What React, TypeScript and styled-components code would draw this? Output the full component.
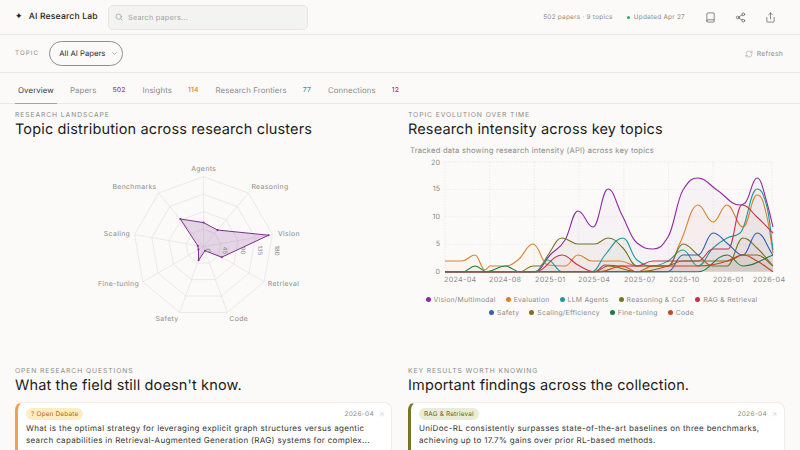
import { FC } from "react";
import styled, { createGlobalStyle } from "styled-components";
import { Book, ChevronDown, RefreshCw, Search, Share, Share2, ArrowUpRight } from "lucide-react";

const GlobalStyle = createGlobalStyle`
  html, body { margin: 0; padding: 0; background: #fbfaf8; }
  body {
    font-family: Inter, "Liberation Sans", sans-serif;
    color: #1c1c1a;
    text-rendering: geometricPrecision;
  }
  * { box-sizing: border-box; }
`;

const Page = styled.div`
  width: 800px;
  height: 450px;
  overflow: hidden;
  background: #fbfaf8;
`;

const Header = styled.header`
  height: 35px;
  display: flex;
  align-items: center;
  padding: 0 15px;
  border-bottom: 1px solid #e8e7e4;
`;

const Brand = styled.div`
  display: flex;
  align-items: center;
  gap: 6px;
  width: 93px;
  font-size: 8.6px;
  font-weight: 500;
  letter-spacing: 0.02em;
  white-space: nowrap;
`;

const Star = styled.span`
  font-family: "DejaVu Sans", sans-serif;
  font-size: 9px;
`;

const SearchBox = styled.div`
  width: 200px;
  height: 25px;
  display: flex;
  align-items: center;
  gap: 5px;
  padding: 0 6px;
  background: #f3f3f1;
  border: 1px solid #e5e4e1;
  border-radius: 5px;
  font-size: 7.3px;
  letter-spacing: 0.03em;
  color: #a3a3a0;
  svg { color: #999; }
`;

const HeaderRight = styled.div`
  margin-left: auto;
  display: flex;
  align-items: center;
  font-size: 6.4px;
  letter-spacing: 0.04em;
  color: #8b8b88;
`;

const Updated = styled.span`
  display: flex;
  align-items: center;
  gap: 4px;
  margin-left: 14px;
  margin-right: 10px;
`;

const Dot = styled.i<{ $color: string; $size?: number }>`
  display: inline-block;
  flex: none;
  width: ${(p) => p.$size ?? 3}px;
  height: ${(p) => p.$size ?? 3}px;
  border-radius: 50%;
  background: ${(p) => p.$color};
`;

const IconButton = styled.span`
  width: 30px;
  display: flex;
  justify-content: center;
  color: #4a4a48;
`;

const TopicRow = styled.div`
  height: 38px;
  display: flex;
  align-items: center;
  padding: 0 15px;
  border-bottom: 1px solid #e8e7e4;
`;

const TopicLabel = styled.span`
  font-size: 6.2px;
  letter-spacing: 0.18em;
  color: #8b8b88;
  margin-right: 10px;
`;

const TopicSelect = styled.div`
  width: 74px;
  height: 25px;
  display: flex;
  align-items: center;
  gap: 6px;
  padding-left: 9px;
  border: 1px solid #8f8f8c;
  border-radius: 13px;
  font-size: 7.7px;
  color: #2c2c2a;
  svg { color: #777; }
`;

const RefreshButton = styled.span`
  margin-left: auto;
  margin-right: 2px;
  display: flex;
  align-items: center;
  gap: 4px;
  font-size: 6.8px;
  letter-spacing: 0.03em;
  color: #8b8b88;
`;

const Tabs = styled.nav`
  height: 31px;
  display: flex;
  padding: 0 15px;
  border-bottom: 1px solid #e8e7e4;
`;

const Tab = styled.div<{ $active?: boolean }>`
  height: 31px;
  display: flex;
  align-items: center;
  padding: 3px ${(p) => (p.$active ? "3px" : "0")} 0;
  margin-right: ${(p) => (p.$active ? "13px" : "17px")};
  font-size: 7.9px;
  letter-spacing: 0.01em;
  color: ${(p) => (p.$active ? "#3a3a38" : "#8b8b88")};
  border-bottom: 1px solid ${(p) => (p.$active ? "#a5a5a2" : "transparent")};
`;

const TabCount = styled.span<{ $color: string }>`
  margin-left: 16px;
  font-size: 6.8px;
  font-weight: 500;
  color: ${(p) => p.$color};
`;

const Grid = styled.main`
  display: grid;
  grid-template-columns: 377px 377px;
  column-gap: 16px;
  padding: 0 15px;
`;

const Panel = styled.section<{ $height: number }>`
  height: ${(p) => p.$height}px;
  display: flex;
  flex-direction: column;
`;

const Eyebrow = styled.div<{ $top?: number }>`
  margin-top: ${(p) => p.$top ?? 0}px;
  font-size: 6.8px;
  line-height: 10px;
  letter-spacing: 0.13em;
  color: #8b8b88;
`;

const Title = styled.h2`
  margin: 0;
  font-size: 14.5px;
  line-height: 19px;
  font-weight: 400;
  letter-spacing: 0.01em;
  color: #1c1c1a;
`;

const ChartNote = styled.div`
  margin: 7px 0 0 2px;
  font-size: 7.6px;
  line-height: 10px;
  letter-spacing: 0.03em;
  color: #8b8b88;
`;

const ChartSvg = styled.svg`
  display: block;
  flex: none;
  font-family: Inter, "Liberation Sans", sans-serif;
`;

const Legend = styled.div`
  width: 345px;
  margin: 9px 0 0 11px;
  display: flex;
  flex-wrap: wrap;
  justify-content: center;
  column-gap: 10px;
  row-gap: 3px;
`;

const LegendItem = styled.span`
  display: flex;
  align-items: center;
  gap: 3px;
  font-size: 6.8px;
  line-height: 9.5px;
  letter-spacing: 0.04em;
  color: #8b8b88;
  white-space: nowrap;
`;

const Card = styled.article<{ $accent: string }>`
  margin-top: 7px;
  height: 80px;
  padding: 5px 6px 0 8px;
  background: #fff;
  border: 1px solid #eeedea;
  border-left: 3px solid ${(p) => p.$accent};
  border-radius: 8px;
`;

const CardTop = styled.div`
  display: flex;
  align-items: center;
  justify-content: space-between;
`;

const Badge = styled.span<{ $bg: string; $color: string }>`
  display: inline-flex;
  align-items: center;
  height: 12px;
  padding: 0 5px;
  border-radius: 6px;
  background: ${(p) => p.$bg};
  color: ${(p) => p.$color};
  font-size: 6.4px;
  letter-spacing: 0.03em;
`;

const CardMeta = styled.span`
  display: flex;
  align-items: center;
  gap: 4px;
  font-size: 6.5px;
  letter-spacing: 0.05em;
  color: #8b8b88;
  svg { color: #c8c8c5; }
`;

const CardText = styled.p`
  margin: 3px 0 0;
  padding-right: 4px;
  font-size: 8px;
  line-height: 11.7px;
  letter-spacing: 0.04em;
  color: #33332f;
`;

// radar
const CX = 203.5;
const CY = 246.7;
const R = 70;
const radar = [
  { name: "Agents", v: 62, x: 203.7, y: 171.3 },
  { name: "Reasoning", v: 56, x: 270, y: 188.7 },
  { name: "Vision", v: 170, x: 289, y: 236 },
  { name: "Retrieval", v: 54, x: 283.5, y: 286.3 },
  { name: "Code", v: 11, x: 238.7, y: 321.3 },
  { name: "Safety", v: 37, x: 167, y: 321.3 },
  { name: "Fine-tuning", v: 15, x: 118.5, y: 286.3 },
  { name: "Scaling", v: 15, x: 117, y: 236 },
  { name: "Benchmarks", v: 93, x: 134.5, y: 188.7 },
];
const polar = (i: number, r: number) => {
  const a = (i * 2 * Math.PI) / radar.length;
  return [CX + r * Math.sin(a), CY - r * Math.cos(a)];
};
const ring = (r: number) =>
  radar.map((_, i) => polar(i, r).map((n) => n.toFixed(1)).join(",")).join(" ");
const radarShape = radar.map((d, i) => polar(i, (d.v / 180) * R));

const RadarChart: FC = () => (
  <ChartSvg width={377} height={215} viewBox="15 139 377 215">
    {[0.25, 0.5, 0.75, 1].map((k) => (
      <polygon key={k} points={ring(R * k)} fill="none" stroke="#e3e2df" strokeWidth={0.7} />
    ))}
    {radar.map((_, i) => {
      const [x, y] = polar(i, R);
      return <line key={i} x1={CX} y1={CY} x2={x} y2={y} stroke="#e3e2df" strokeWidth={0.7} />;
    })}
    <polygon
      points={radarShape.map((p) => p.join(",")).join(" ")}
      fill="#8e3a9d"
      fillOpacity={0.2}
      stroke="#7f2f8f"
      strokeWidth={1}
    />
    {radarShape.map((p, i) => (
      <circle key={i} cx={p[0]} cy={p[1]} r={1} fill="#7f2f8f" />
    ))}
    {[
      ["0", 205.7],
      ["45", 223],
      ["90", 240.7],
      ["135", 257.7],
      ["180", 275.3],
    ].map(([t, x]) => (
      <text
        key={t}
        transform={`translate(${x} 250.5) rotate(90)`}
        fontSize={6}
        fill="#8b8b88"
        textAnchor="middle"
      >
        {t}
      </text>
    ))}
    {radar.map((d) => (
      <text key={d.name} x={d.x} y={d.y} fontSize={6.9} letterSpacing={0.35} fill="#8b8b88" textAnchor="middle">
        {d.name}
      </text>
    ))}
  </ChartSvg>
);

// trend chart, points are page coordinates read off the plot
type Pt = [number, number];
const base = 271.7;

const series: { name: string; color: string; pts: Pt[] }[] = [
  {
    name: "Vision/Multimodal",
    color: "#8e2a9e",
    pts: [[445, base], [535, base], [550, 255], [565, 240], [578, 211], [593, 227], [608, 189], [622, 215], [637, 243], [653, 249], [668, 237], [683, 190], [698, 178], [717, 190], [740, 205], [745, 203], [757, 178], [767, 203], [773, 227]],
  },
  {
    name: "Evaluation",
    color: "#d9822b",
    pts: [[445, 261], [462, 261], [475, 255], [485, 270], [490, 266], [505, 266], [518, 260], [533, 244], [548, 265], [565, 266], [578, 255], [592, 261], [620, 261], [637, 266], [668, 266], [680, 243], [698, 205], [713, 222], [727, 205], [743, 227], [757, 195], [767, 217], [773, 253]],
  },
  {
    name: "LLM Agents",
    color: "#1f9a9a",
    pts: [[445, base], [535, base], [548, 260], [562, base], [592, base], [605, 255], [623, 238], [637, 260], [653, 266], [668, 261], [683, 250], [698, 266], [713, 248], [727, 238], [740, 233], [757, 189], [767, 207], [773, 250]],
  },
  {
    name: "Reasoning & CoT",
    color: "#75752a",
    pts: [[445, base], [520, base], [533, 266], [540, 266], [548, 255], [562, 238], [578, 244], [595, 244], [608, 238], [623, 248], [637, 266], [668, 266], [683, 244], [698, 255], [713, 266], [727, 266], [743, 238], [757, 248], [773, 266]],
  },
  {
    name: "RAG & Retrieval",
    color: "#c9304f",
    pts: [[445, base], [535, base], [562, 255], [578, 265], [595, base], [605, 265], [622, 266], [637, 266], [653, 261], [698, 261], [713, 249], [728, 249], [742, 205], [757, 217], [773, 233]],
  },
  {
    name: "Safety",
    color: "#3560b0",
    pts: [[445, base], [668, base], [683, 255], [698, 255], [713, 233], [728, 244], [743, 255], [757, 233], [773, 255]],
  },
  {
    name: "Scaling/Efficiency",
    color: "#8a6a1c",
    pts: [[445, base], [595, base], [608, 266], [637, base], [668, 266], [683, 261], [713, 261], [728, 261], [743, 255], [757, 255], [773, 266]],
  },
  {
    name: "Fine-tuning",
    color: "#1f7a45",
    pts: [[445, base], [463, base], [475, 266], [487, base], [505, 266], [520, base], [698, base], [727, 255], [743, 266], [773, 255]],
  },
  {
    name: "Code",
    color: "#c8451f",
    pts: [[445, base], [600, base], [622, 266], [637, base], [653, 266], [698, 266], [727, 261], [743, 255], [757, 261], [773, base]],
  },
];

// monotone cubic through the points, flat at local peaks
const smooth = (pts: Pt[]) => {
  const s = pts.slice(1).map((p, i) => (p[1] - pts[i][1]) / (p[0] - pts[i][0]));
  const m = pts.map((p, i) => {
    if (i === 0) return s[0];
    if (i === pts.length - 1) return s[s.length - 1];
    if (s[i - 1] * s[i] <= 0) return 0;
    const h0 = p[0] - pts[i - 1][0];
    const h1 = pts[i + 1][0] - p[0];
    const slope = (s[i - 1] * h1 + s[i] * h0) / (h0 + h1);
    return Math.sign(s[i]) * Math.min(Math.abs(s[i - 1]) * 2, Math.abs(s[i]) * 2, Math.abs(slope));
  });
  let d = `M${pts[0][0]} ${pts[0][1]}`;
  for (let i = 1; i < pts.length; i++) {
    const h = (pts[i][0] - pts[i - 1][0]) * 0.42;
    d += `C${pts[i - 1][0] + h} ${pts[i - 1][1] + m[i - 1] * h} ${pts[i][0] - h} ${pts[i][1] - m[i] * h} ${pts[i][0]} ${pts[i][1]}`;
  }
  return d;
};

const gridX = [445, 489.7, 534.4, 579, 623.8, 668.5, 713.2, 772];
const gridY = [162, 189.4, 216.9, 244.3];
const ticks: [string, number][] = [["20", 162], ["15", 188.5], ["10", 216], ["5", 243.5], ["0", 271]];
const months: [string, number][] = [
  ["2024-04", 444], ["2024-08", 489], ["2025-01", 535], ["2025-04", 578],
  ["2025-07", 624], ["2025-10", 669], ["2026-01", 713], ["2026-04", 753],
];

const TrendChart: FC = () => (
  <ChartSvg width={385} height={130} viewBox="408 156 385 130">
    {gridX.map((x) => (
      <line key={x} x1={x} y1={162} x2={x} y2={base} stroke="#e4e3e0" strokeWidth={0.6} strokeDasharray="1.5 1.5" />
    ))}
    {gridY.map((y) => (
      <line key={y} x1={445} y1={y} x2={772} y2={y} stroke="#e4e3e0" strokeWidth={0.6} strokeDasharray="1.5 1.5" />
    ))}
    {series.map((l) => (
      <path key={l.name} d={`${smooth(l.pts)}L773 ${base}L445 ${base}Z`} fill={l.color} fillOpacity={0.035} />
    ))}
    {series.map((l) => (
      <path key={l.name} d={smooth(l.pts)} fill="none" stroke={l.color} strokeWidth={1.1} />
    ))}
    {ticks.map(([t, y]) => (
      <text key={t} x={440} y={y + 2.5} fontSize={7.2} fill="#8b8b88" textAnchor="end">
        {t}
      </text>
    ))}
    {months.map(([t, x]) => (
      <text key={t} x={x} y={281.5} fontSize={7.2} letterSpacing={0.3} fill="#8b8b88">
        {t}
      </text>
    ))}
  </ChartSvg>
);

const tabs = [
  { name: "Papers", count: 502, color: "#9c3fb5" },
  { name: "Insights", count: 114, color: "#d9822b" },
  { name: "Research Frontiers", count: 77, color: "#1f9a9a" },
  { name: "Connections", count: 12, color: "#c9304f" },
];

export default function App() {
  return (
    <Page>
      <GlobalStyle />
      <Header>
        <Brand>
          <Star>✦</Star>
          AI Research Lab
        </Brand>
        <SearchBox>
          <Search size={8} />
          Search papers...
        </SearchBox>
        <HeaderRight>
          502 papers · 9 topics
          <Updated>
            <Dot $color="#17b26a" />
            Updated Apr 27
          </Updated>
          <IconButton><Book size={11} strokeWidth={1.4} /></IconButton>
          <IconButton><Share2 size={11} strokeWidth={1.4} /></IconButton>
          <IconButton><Share size={11} strokeWidth={1.4} /></IconButton>
        </HeaderRight>
      </Header>
      <TopicRow>
        <TopicLabel>TOPIC</TopicLabel>
        <TopicSelect>
          All AI Papers
          <ChevronDown size={7} />
        </TopicSelect>
        <RefreshButton>
          <RefreshCw size={8} strokeWidth={1.4} />
          Refresh
        </RefreshButton>
      </TopicRow>
      <Tabs>
        <Tab $active>Overview</Tab>
        {tabs.map((t) => (
          <Tab key={t.name}>
            {t.name}
            <TabCount $color={t.color}>{t.count}</TabCount>
          </Tab>
        ))}
      </Tabs>
      <Grid>
        <Panel $height={262}>
          <Eyebrow $top={6}>RESEARCH LANDSCAPE</Eyebrow>
          <Title>Topic distribution across research clusters</Title>
          <RadarChart />
        </Panel>
        <Panel $height={262}>
          <Eyebrow $top={6}>TOPIC EVOLUTION OVER TIME</Eyebrow>
          <Title>Research intensity across key topics</Title>
          <ChartNote>Tracked data showing research intensity (API) across key topics</ChartNote>
          <TrendChart />
          <Legend>
            {series.map((l) => (
              <LegendItem key={l.name}>
                <Dot $color={l.color} $size={5} />
                {l.name}
              </LegendItem>
            ))}
          </Legend>
        </Panel>
        <Panel $height={100}>
          <Eyebrow>OPEN RESEARCH QUESTIONS</Eyebrow>
          <Title>What the field still doesn't know.</Title>
          <Card $accent="#f0a050">
            <CardTop>
              <Badge $bg="#fdeec2" $color="#b5651d">? Open Debate</Badge>
              <CardMeta>2026-04 <ArrowUpRight size={7} /></CardMeta>
            </CardTop>
            <CardText>
              What is the optimal strategy for leveraging explicit graph structures versus agentic
              search capabilities in Retrieval-Augmented Generation (RAG) systems for complex...
            </CardText>
          </Card>
        </Panel>
        <Panel $height={100}>
          <Eyebrow>KEY RESULTS WORTH KNOWING</Eyebrow>
          <Title>Important findings across the collection.</Title>
          <Card $accent="#75752a">
            <CardTop>
              <Badge $bg="#e9ecd6" $color="#5f6428">RAG &amp; Retrieval</Badge>
              <CardMeta>2026-04 <ArrowUpRight size={7} /></CardMeta>
            </CardTop>
            <CardText>
              UniDoc-RL consistently surpasses state-of-the-art baselines on three benchmarks,
              achieving up to 17.7% gains over prior RL-based methods.
            </CardText>
          </Card>
        </Panel>
      </Grid>
    </Page>
  );
}
